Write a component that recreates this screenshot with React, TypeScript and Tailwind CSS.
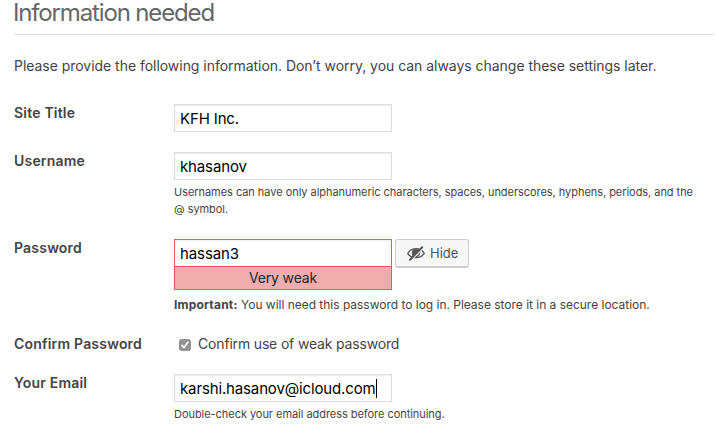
import type { ReactNode } from "react";

function Row({ label, className, children }: { label: string; className: string; children: ReactNode }) {
  return (
    <div className={`flex ${className}`}>
      <div className="w-[160px] shrink-0 text-[14px] leading-[18px] font-semibold tracking-[0.2px] whitespace-nowrap">
        {label}
      </div>
      <div className="flex-1">{children}</div>
    </div>
  );
}

function Field({ value, caret }: { value: string; caret?: boolean }) {
  return (
    <div className="flex h-[28px] w-[218px] items-center border border-[#ddd] bg-white pt-[2px] pl-[5px] text-[15px] tracking-[-0.14px] text-black shadow-[inset_0_1px_2px_rgba(0,0,0,0.07)]">
      <span className="whitespace-nowrap">{value}</span>
      {caret && <span className="mb-[2px] h-[19px] w-px bg-black" />}
    </div>
  );
}

function HiddenIcon() {
  return (
    <svg width="20" height="20" viewBox="0 0 20 20" fill="none" stroke="#555" strokeLinecap="round">
      <path d="M1.8 10.6C4.6 4.3 14.4 3.9 18.2 10.3C15 15.8 5.4 16.3 1.8 10.6Z" strokeWidth="1.3" />
      <path d="M7.1 6.9C5.7 8.8 5.9 11.4 7.2 13.3L12.9 7.2C11.4 6 8.9 5.8 7.1 6.9Z" fill="#555" strokeWidth="0.8" />
      <path d="M13.6 9C13.9 11.2 12.3 13.3 9.7 13.7" strokeWidth="1.4" />
      <path d="M5.4 17 17.4 5" stroke="#f7f7f7" strokeWidth="1.2" />
      <path d="M4 16.7 16.2 4.2" strokeWidth="2" />
    </svg>
  );
}

export default function App() {
  return (
    <div className="h-[438px] w-[719px] bg-white pr-[5px] pl-[14px] font-['Inter','Liberation_Sans',sans-serif] text-[#444]">
      <h1 className="h-[35px] border-b border-[#ddd] text-[24px] leading-[26px] font-normal tracking-[-1.15px] text-[#666]">
        <span className="-ml-px">Information needed</span>
      </h1>
      <p className="mt-[21px] h-[48px] text-[14px] leading-[20px] tracking-[-0.035px] whitespace-nowrap">
        Please provide the following information. Don’t worry, you can always change these settings later.
      </p>
      <Row label="Site Title" className="h-[48px]">
        <Field value="KFH Inc." />
      </Row>
      <Row label="Username" className="h-[87px]">
        <Field value="khasanov" />
        <p className="mt-[4px] text-[11px] leading-[17px] tracking-[-0.045px] whitespace-nowrap">
          Usernames can have only alphanumeric characters, spaces, underscores, hyphens, periods, and the
          <br />@ symbol.
        </p>
      </Row>
      <Row label="Password" className="h-[96px]">
        <div className="flex gap-[3px]">
          <div className="w-[218px] border border-[#e35b5b]">
            <div className="flex h-[26px] items-center bg-white pt-[2px] pl-[5px] text-[15px] tracking-[-0.1px] text-black shadow-[inset_0_1px_2px_rgba(0,0,0,0.07)]">
              hassan3
            </div>
            <div className="h-[23px] border-t border-[#e35b5b] bg-[#f1adad] text-center text-[14px] leading-[22px] tracking-[-0.15px] text-[#23282d]">
              Very weak
            </div>
          </div>
          <button className="flex h-[29px] w-[74px] items-center rounded-[3px] border border-b-2 border-[#ccc] bg-[#f7f7f7] pl-[10px] text-[13px] text-[#555]">
            <HiddenIcon />
            <span className="mt-[2px] ml-[4px]">Hide</span>
          </button>
        </div>
        <p className="mt-[6px] text-[12px] leading-[18px] tracking-[-0.02px] whitespace-nowrap">
          <strong className="font-bold tracking-[0.2px]">Important:</strong> You will need this password to log in. Please store it in a secure location.
        </p>
      </Row>
      <Row label="Confirm Password" className="h-[39px]">
        <div className="flex items-center pl-[5px] text-[14px] leading-[18px]">
          <span className="mt-[2px] flex size-[12px] items-center justify-center rounded-[3px] bg-[#929296]">
            <svg width="10" height="10" viewBox="0 0 10 10" fill="none" stroke="#fff" strokeWidth="1.6" strokeLinecap="round" strokeLinejoin="round">
              <path d="M2 5.4 4 7.6 8 2.2" />
            </svg>
          </span>
          <span className="ml-[7px] tracking-[-0.17px] whitespace-nowrap">Confirm use of weak password</span>
        </div>
      </Row>
      <Row label="Your Email" className="h-[60px]">
        <Field value="karshi.hasanov@icloud.com" caret />
        <p className="mt-[3px] text-[11px] leading-[18px] tracking-[-0.045px] whitespace-nowrap">
          Double-check your email address before continuing.
        </p>
      </Row>
    </div>
  );
}
